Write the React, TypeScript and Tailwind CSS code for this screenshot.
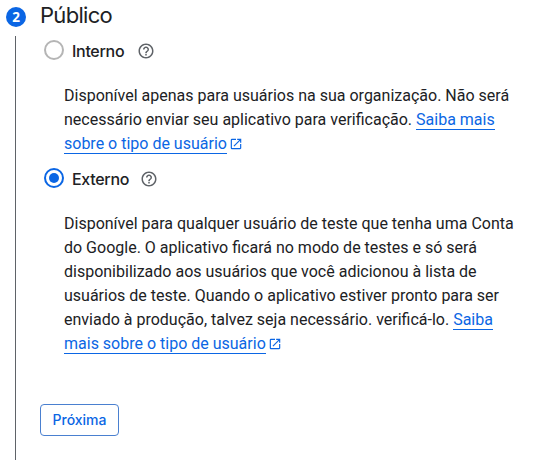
import React from 'react';
import { MdHelpOutline, MdOpenInNew } from 'react-icons/md';

const options = [
  {
    id: 'interno',
    label: 'Interno',
    description:
      'Disponível apenas para usuários na sua organização. Não será necessário enviar seu aplicativo para verificação.',
    link: 'Saiba mais sobre o tipo de usuário',
    selected: false,
    labelClass: 'w-[54px]'
  },
  {
    id: 'externo',
    label: 'Externo',
    description:
      'Disponível para qualquer usuário de teste que tenha uma Conta do Google. O aplicativo ficará no modo de testes e só será disponibilizado aos usuários que você adicionou à lista de usuários de teste. Quando o aplicativo estiver pronto para ser enviado à produção, talvez seja necessário. verificá-lo.',
    link: 'Saiba mais sobre o tipo de usuário',
    selected: true,
    labelClass: 'w-[57px]'
  }
];

const Radio: React.FC<{ selected: boolean }> = ({ selected }) => (
  <span
    className={`flex h-5 w-5 shrink-0 items-center justify-center rounded-full border-2 ${
      selected ? 'border-[#0b66e4]' : 'border-[#b5b5b5]'
    }`}
  >
    {selected && <span className="h-2.5 w-2.5 rounded-full bg-[#0b66e4]" />}
  </span>
);

export default function App() {
  return (
    <div className="flex h-[470px] w-[537px] overflow-hidden bg-white font-['Roboto',sans-serif] text-[#202124]">
      <div className="flex w-10 shrink-0 flex-col pl-1.5 pt-[7px]">
        <span className="flex h-5 w-5 items-center justify-center rounded-full bg-[#0b66e4] font-['Open_Sans',sans-serif] text-[13.5px] leading-5 font-bold text-white">
          2
        </span>
        <span className="ml-[9px] mt-[9px] h-[424px] w-px bg-[#5f6368]" />
      </div>

      <div className="flex w-[480px] flex-col items-start">
        <h2 className="h-8 whitespace-nowrap font-['Inter',sans-serif] text-[22px] leading-[31px] tracking-[-0.7px]">Público</h2>

        <div className="mt-2 flex flex-col">
          {options.map((option) => (
            <div key={option.id}>
              <div className="flex h-5 items-center pl-1">
                <Radio selected={option.selected} />
                <span
                  className={`ml-2 whitespace-nowrap pt-0.5 font-['Inter',sans-serif] text-base leading-5 font-medium tracking-[-0.3px] ${option.labelClass}`}
                >
                  {option.label}
                </span>
                <MdHelpOutline className="ml-[11px] mt-0.5 h-[18px] w-[18px] text-[#5f6368]" />
              </div>
              <p className="mt-6 mb-3 w-[478px] pl-6 text-base leading-6">
                {option.description}{' '}
                <a href="#" className="border-b border-[#0b66e4] text-[#0b66e4]">
                  {option.link}
                </a>
                <MdOpenInNew className="ml-0.5 inline h-3.5 w-3.5 align-[-2px] text-[#0b66e4]" />
              </p>
            </div>
          ))}
        </div>

        <button className="mt-9 h-8 w-[79px] rounded border border-[#4a80d0] font-['Inter',sans-serif] text-sm font-medium text-[#0b66e4]">
          Próxima
        </button>
      </div>
    </div>
  );
}
